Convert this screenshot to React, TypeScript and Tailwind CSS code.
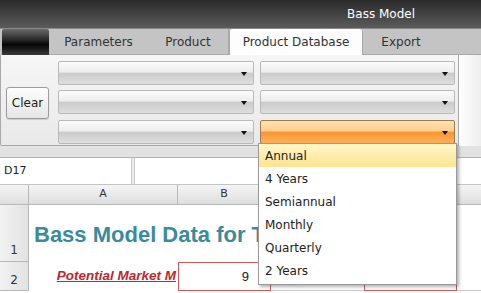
const font = "font-['DejaVu_Sans',Verdana,sans-serif]";
const arial = "font-['Liberation_Sans',Arial,sans-serif]";

function Select({ hot }: { hot?: boolean }) {
  return (
    <div
      className={
        'relative h-[24px] rounded-[2px] border ' +
        (hot
          ? 'border-[#9c7b58] bg-[linear-gradient(#ffe2b0,#ffd08c_45%,#fb9434_52%,#ffb25a)]'
          : 'border-[#b9b9b9] bg-[linear-gradient(#fbfbfb,#eeeeee_45%,#cbcbcb_52%,#dedede)]')
      }
    >
      <div className="absolute right-[6px] top-[10px] h-0 w-0 border-x-[3px] border-t-[4px] border-x-transparent border-t-[#111]" />
    </div>
  );
}

const options = ['Annual', '4 Years', 'Semiannual', 'Monthly', 'Quarterly', '2 Years'];

const headCell = 'border-b border-r border-[#b8b8b8] bg-[linear-gradient(#f5f5f5,#dedede)]';

export default function App() {
  return (
    <div className={`relative h-[293px] w-[481px] overflow-hidden bg-white ${font}`}>
      {/* title bar */}
      <div className="flex h-[28px] items-center justify-end bg-[linear-gradient(#2a2a2a,#5b5b5b)] pr-[66px] text-[12px] text-white">
        Bass Model
      </div>

      {/* tabs */}
      <div className="flex h-[27px] border-t border-[#8a8a8a] bg-[#c4c4c4] text-[12px] text-[#333]">
        <div className="ml-[2px] w-[47px] rounded-t-[2px] bg-[linear-gradient(#6a6a6a,#2a2a2a_40%,#050505_60%,#3a3a3a)]" />
        <div className="flex w-[99px] items-center justify-center border-b border-[#a8a8a8]">Parameters</div>
        <div className="flex w-[81px] items-center justify-center border-b border-r border-[#a8a8a8]">Product</div>
        <div className="flex w-[134px] items-center justify-center rounded-t-[3px] border-x border-[#a8a8a8] bg-[#fdfdfd]">
          Product Database
        </div>
        <div className="flex w-[76px] items-center justify-center border-b border-[#a8a8a8]">Export</div>
        <div className="flex-1 border-b border-[#a8a8a8]" />
      </div>

      {/* ribbon */}
      <div className="flex h-[91px] bg-[linear-gradient(90deg,#ececec_95%,#fafafa)]">
        <div className="flex w-[459px] rounded-b-[2px] border-x border-b border-[#a9a9a9] bg-[linear-gradient(#f6f6f6,#e9e9e9)] pt-[6px]">
          <div className="flex w-[57px] items-center pl-[5px]">
            <button className="h-[32px] w-[43px] rounded-[3px] border border-[#9c9c9c] bg-[linear-gradient(#fdfdfd,#e6e6e6)] text-[12px] text-[#222] shadow-[0_1px_1px_rgba(0,0,0,0.15)]">
              Clear
            </button>
          </div>
          <div className="grid grid-cols-[196px_195px] gap-x-[6px] gap-y-[4px]">
            <Select />
            <Select />
            <Select />
            <Select />
            <Select />
            <Select hot />
          </div>
        </div>
        <div className="flex-1 bg-[linear-gradient(90deg,#ffffff,#eeeeee)]" />
      </div>

      {/* gap band */}
      <div className="h-[12px] border-b border-[#b4b4b4] bg-[#e2e2e2]" />

      {/* formula bar */}
      <div className="flex h-[27px] border-b border-[#c4c4c4] bg-white text-[11px] text-[#222]">
        <div className="flex w-[131px] items-center pl-[4px]">D17</div>
        <div className="w-[4px] border-x border-[#c8c8c8] bg-[#ececec]" />
        <div className="flex-1" />
      </div>

      {/* column headers */}
      <div className="flex h-[20px] text-[11px] text-[#333]">
        <div className={`w-[29px] ${headCell}`} />
        <div className={`flex w-[149px] items-center justify-center ${headCell}`}>A</div>
        <div className={`flex w-[93px] items-center justify-center ${headCell}`}>B</div>
        <div className={`w-[93px] ${headCell}`} />
        <div className={`w-[91px] ${headCell}`} />
        <div className="flex-1 border-b border-[#b8b8b8] bg-[linear-gradient(#f5f5f5,#dedede)]" />
      </div>

      {/* row 1 */}
      <div className="flex h-[57px]">
        <div className="flex w-[29px] items-end justify-center border-b border-r border-[#b8b8b8] bg-[linear-gradient(90deg,#f2f2f2,#e2e2e2)] pb-[2px] text-[12px] text-[#333]">
          1
        </div>
        <div className="w-[229px] overflow-hidden">
          <div className={`flex h-full items-center whitespace-nowrap pl-[5px] pt-[1px] text-[22px] font-bold text-[#3a8b9b] ${arial}`}>
            Bass Model Data for T
          </div>
        </div>
        <div className="w-[197px]" />
        <div className="flex-1 border-l border-[#b0b0b0]" />
      </div>

      {/* row 2 */}
      <div className="flex h-[29px]">
        <div className="flex w-[29px] items-end justify-center border-b border-r border-[#b8b8b8] bg-[linear-gradient(90deg,#f2f2f2,#e2e2e2)] pb-[1px] text-[12px] text-[#333]">
          2
        </div>
        <div className={`flex w-[149px] items-center justify-end pr-[2px] text-[13.5px] font-bold italic text-[#c0272d] underline ${arial}`}>
          Potential Market M
        </div>
        <div className={`flex w-[93px] items-center justify-end border border-[#d05a5a] pr-[21px] text-[13px] text-[#222] ${arial}`}>
          9
        </div>
        <div className="w-[93px] border-b border-[#c8c8c8]" />
        <div className="w-[93px] border border-[#d05a5a]" />
        <div className="flex-1 border-b border-[#c8c8c8]" />
      </div>

      {/* dropdown list */}
      <div className="absolute left-[258px] top-[143px] w-[199px] border border-[#9a9a9a] bg-white pb-[2px] text-[12px] text-[#222] shadow-[2px_2px_3px_rgba(0,0,0,0.3)]">
        {options.map((o, i) => (
          <div
            key={o}
            className={
              'flex h-[23px] items-center pl-[6px] ' +
              (i === 0 ? 'bg-[linear-gradient(#fff6c8,#fbe591)]' : '')
            }
          >
            {o}
          </div>
        ))}
      </div>
    </div>
  );
}
